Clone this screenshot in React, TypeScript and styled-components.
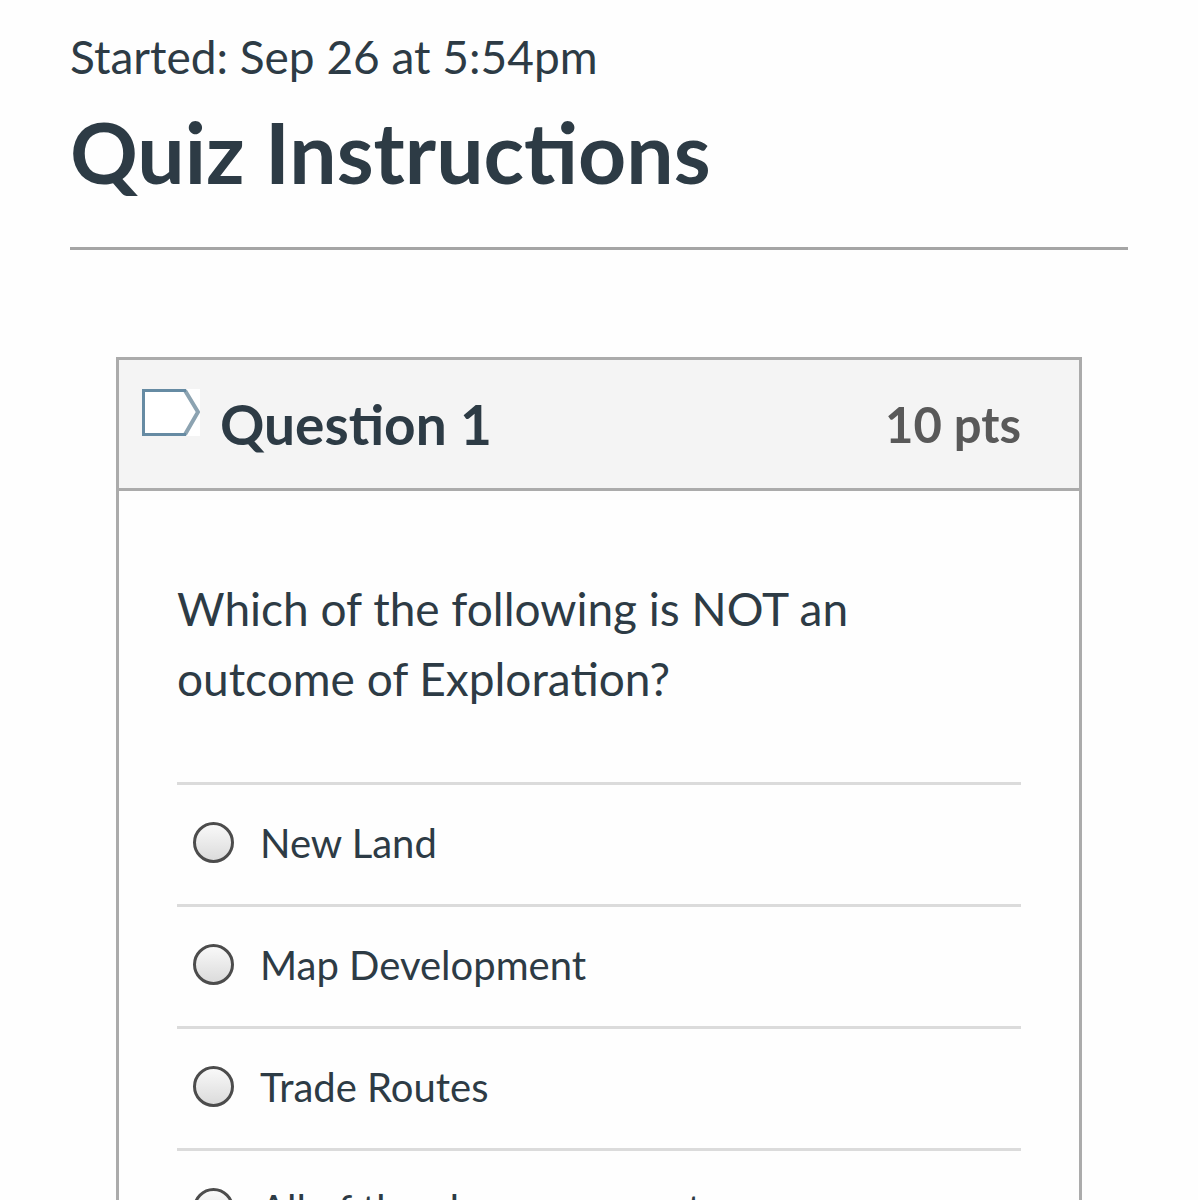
import React, { useState } from "react";
import styled, { createGlobalStyle } from "styled-components";

const GlobalStyle = createGlobalStyle`
  *, *::before, *::after {
    box-sizing: border-box;
  }
  body {
    margin: 0;
    background: #fefefe;
    color: #2d3b45;
    font-family: Lato, "Liberation Sans", sans-serif;
    font-size: 46px;
    line-height: 70px;
  }
`;

const Page = styled.main`
  padding: 22px 70px 70px;
`;

const QuizHeader = styled.header`
  padding-bottom: 45px;
  border-bottom: 3px solid #a5a5a5;
`;

const Started = styled.p`
  margin: 0;
  padding-bottom: 10px;
`;

const Title = styled.h1`
  margin: 0;
  font-size: 84px;
  line-height: 100px;
  font-weight: 700;
`;

const QuestionCard = styled.section`
  margin: 107px 46px 0;
  border: 3px solid #ababab;
`;

const QuestionHeader = styled.header`
  display: flex;
  align-items: center;
  gap: 20px;
  height: 131px;
  padding: 0 58px 0 23px;
  background: #f4f4f4;
  border-bottom: 3px solid #ababab;
`;

const FlagButton = styled.button`
  align-self: flex-start;
  display: block;
  margin-top: 29px;
  padding: 0;
  border: 0;
  background: none;
  cursor: pointer;

  svg {
    display: block;
  }
`;

const QuestionName = styled.h2`
  flex: 1;
  margin: 0;
  font-size: 55px;
  font-weight: 700;
`;

const Points = styled.span`
  color: #595959;
  font-size: 49px;
  font-weight: 700;
`;

const QuestionBody = styled.div`
  padding: 83px 58px 58px;
`;

const QuestionText = styled.p`
  margin: 0 0 68px;
`;

const Answers = styled.fieldset`
  min-width: 0;
  margin: 0;
  padding: 0;
  border: 0;
`;

const Answer = styled.label`
  display: flex;
  align-items: center;
  gap: 26px;
  height: 122px;
  padding: 0 0 4px 16px;
  border-top: 3px solid #dbdbdb;
  font-size: 40px;
  cursor: pointer;
`;

const Radio = styled.input`
  appearance: none;
  flex: none;
  width: 41px;
  height: 41px;
  margin: 0;
  border: 3px solid #4c4c4c;
  border-radius: 50%;
  background: linear-gradient(#fbfbfb, #d9d9d9) border-box;

  &:checked {
    background: radial-gradient(circle, #4c4c4c 8px, #e6e6e6 9px);
  }
`;

const FlagIcon = () => (
  <svg width="58" height="47" viewBox="0 0 58 47" aria-hidden="true">
    <rect width="58" height="47" fill="#fff" />
    <path d="M43 1.5L56 23L43 45.5" fill="none" stroke="#8ca3b1" strokeWidth="4" />
    <path d="M44 1.5H1.5v44H44" fill="none" stroke="#668ba3" strokeWidth="3" />
  </svg>
);

const answers = [
  "New Land",
  "Map Development",
  "Trade Routes",
  "All of the above were outcomes",
];

export default function App() {
  const [selected, setSelected] = useState<string | null>(null);

  return (
    <>
      <GlobalStyle />
      <Page>
        <QuizHeader>
          <Started>Started: Sep 26 at 5:54pm</Started>
          <Title>Quiz Instructions</Title>
        </QuizHeader>
        <QuestionCard>
          <QuestionHeader>
            <FlagButton type="button" aria-label="Flag question">
              <FlagIcon />
            </FlagButton>
            <QuestionName>Question 1</QuestionName>
            <Points>10 pts</Points>
          </QuestionHeader>
          <QuestionBody>
            <QuestionText id="question-text">
              Which of the following is NOT an outcome of Exploration?
            </QuestionText>
            <Answers aria-labelledby="question-text">
              {answers.map((answer) => (
                <Answer key={answer}>
                  <Radio
                    type="radio"
                    name="question-1"
                    value={answer}
                    checked={selected === answer}
                    onChange={() => setSelected(answer)}
                  />
                  {answer}
                </Answer>
              ))}
            </Answers>
          </QuestionBody>
        </QuestionCard>
      </Page>
    </>
  );
}
